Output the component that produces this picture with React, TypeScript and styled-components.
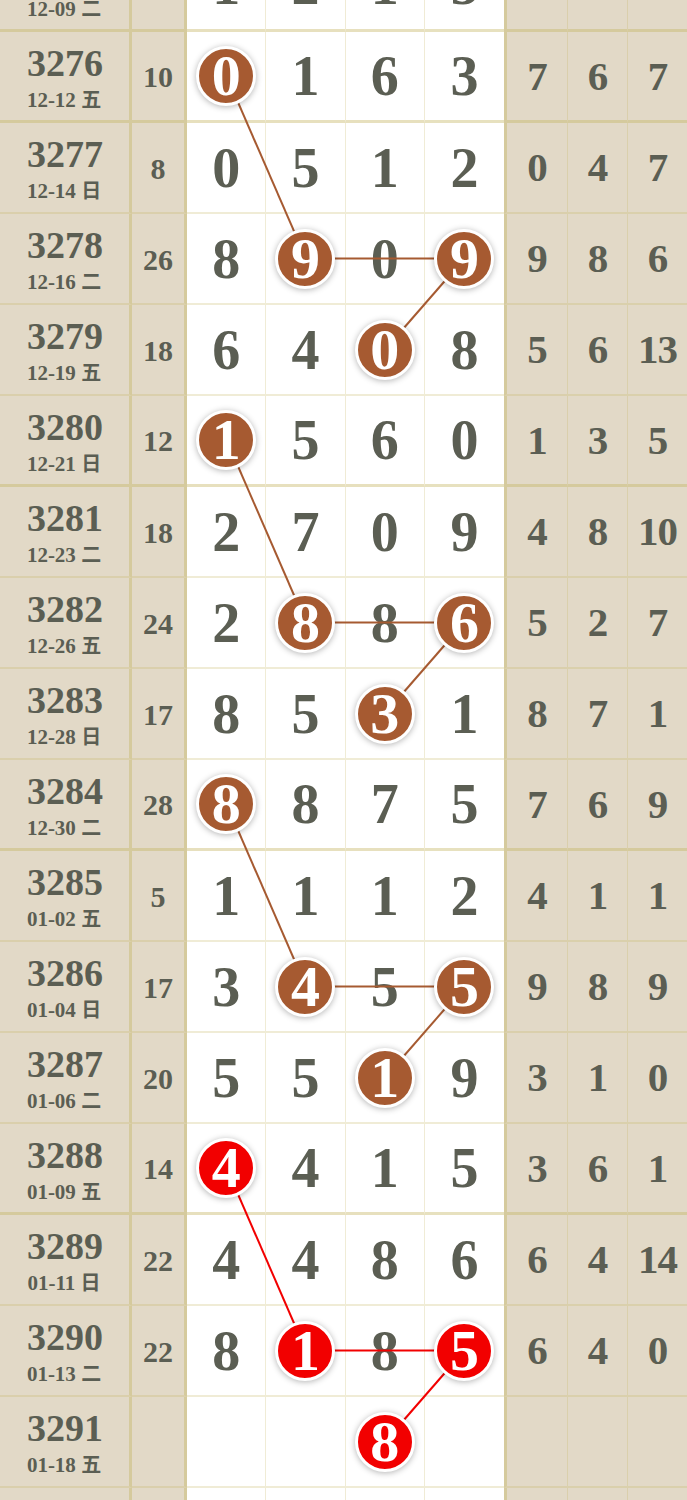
import React from "react";
import styled, { createGlobalStyle } from "styled-components";

const GlobalStyle = createGlobalStyle`
  html, body {
    margin: 0;
    padding: 0;
    background: #ffffff;
    overflow: hidden;
  }
  * { box-sizing: border-box; }
`;

const ROW_H = 91;
const LEFT_W = 132;
const SUM_W = 55;
const RIGHT_W = 183;
const PAGE_W = 687;
const DIGIT_W = (PAGE_W - LEFT_W - SUM_W - RIGHT_W) / 4;

const TEXT = "#5b5e53";
const BEIGE = "#e2d9c7";
const THIN = "rgba(196, 180, 95, 0.26)";
const THICK = "rgba(196, 180, 95, 0.4)";
const BROWN = "#a65a31";
const RED = "#f20000";

type Row = {
  p: string;
  d: string;
  w: string;
  sum: string;
  main: string[];
  right: string[];
};

const mk = (p: string, d: string, w: string, sum: string, main: string, right: string[]): Row => ({
  p,
  d,
  w,
  sum,
  main: main.split(""),
  right,
});

const rows: Row[] = [
  mk("3275", "12-09", "二", "9", "1215", ["5", "2", "7"]),
  mk("3276", "12-12", "五", "10", "0163", ["7", "6", "7"]),
  mk("3277", "12-14", "日", "8", "0512", ["0", "4", "7"]),
  mk("3278", "12-16", "二", "26", "8909", ["9", "8", "6"]),
  mk("3279", "12-19", "五", "18", "6408", ["5", "6", "13"]),
  mk("3280", "12-21", "日", "12", "1560", ["1", "3", "5"]),
  mk("3281", "12-23", "二", "18", "2709", ["4", "8", "10"]),
  mk("3282", "12-26", "五", "24", "2886", ["5", "2", "7"]),
  mk("3283", "12-28", "日", "17", "8531", ["8", "7", "1"]),
  mk("3284", "12-30", "二", "28", "8875", ["7", "6", "9"]),
  mk("3285", "01-02", "五", "5", "1112", ["4", "1", "1"]),
  mk("3286", "01-04", "日", "17", "3455", ["9", "8", "9"]),
  mk("3287", "01-06", "二", "20", "5519", ["3", "1", "0"]),
  mk("3288", "01-09", "五", "14", "4415", ["3", "6", "1"]),
  mk("3289", "01-11", "日", "22", "4486", ["6", "4", "14"]),
  mk("3290", "01-13", "二", "22", "8185", ["6", "4", "0"]),
  { p: "3291", d: "01-18", w: "五", sum: "", main: ["", "", "8", ""], right: ["", "", ""] },
  { p: "", d: "", w: "", sum: "", main: ["", "", "", ""], right: ["", "", ""] },
];

type BallMark = { row: number; col: number; red: boolean };

const balls: BallMark[] = [];
const links: { a: BallMark; b: BallMark }[] = [];
for (let g = 0; g < 4; g++) {
  const base = 1 + g * 4;
  const red = g === 3;
  const b0 = { row: base, col: 0, red };
  const b1 = { row: base + 2, col: 1, red };
  const b3 = { row: base + 2, col: 3, red };
  const b2 = { row: base + 3, col: 2, red };
  balls.push(b0, b1, b3, b2);
  links.push({ a: b0, b: b1 }, { a: b1, b: b3 }, { a: b3, b: b2 });
}

const ballAt = (row: number, col: number) => balls.find((b) => b.row === row && b.col === col);

const isThick = (i: number) => i % 4 === 1 || i === 0;
const borderOf = (i: number) => (isThick(i) ? 3 : 2);

const centerX = (col: number) => LEFT_W + SUM_W + DIGIT_W * (col + 0.5);
const centerY = (row: number) => ROW_H * row + (ROW_H - borderOf(row)) / 2;

const Page = styled.div`
  width: ${PAGE_W}px;
  height: 1500px;
  overflow: hidden;
  background: #ffffff;
`;

const Table = styled.div`
  position: relative;
  margin-top: -59px;
  width: ${PAGE_W}px;
  font-family: "Liberation Serif", "Noto Sans CJK SC", serif;
  font-weight: 700;
  color: ${TEXT};
`;

const RowBox = styled.div`
  display: grid;
  grid-template-columns: ${LEFT_W}px ${SUM_W}px repeat(4, 1fr) 63px 60px 60px;
  height: ${ROW_H}px;
`;

const Cell = styled.div<{ $thick: boolean }>`
  display: flex;
  align-items: center;
  justify-content: center;
  border-bottom: ${(p) => (p.$thick ? 3 : 2)}px solid ${(p) => (p.$thick ? THICK : THIN)};
  overflow: visible;
`;

const PeriodCell = styled(Cell)`
  flex-direction: column;
  gap: 6px;
  background: ${BEIGE};
  border-right: 3px solid ${THICK};
  padding-left: 1px;
`;

const PeriodNo = styled.div`
  font-size: 38px;
  line-height: 38px;
  height: 38px;
`;

const PeriodDate = styled.div`
  font-size: 21px;
  line-height: 21px;
  height: 21px;
  white-space: nowrap;
  margin-left: -2px;
`;

const Week = styled.span`
  font-family: "Noto Sans CJK SC", sans-serif;
  font-size: 20px;
  font-weight: 700;
`;

const SumCell = styled(Cell)`
  background: ${BEIGE};
  border-right: 3px solid ${THICK};
  font-size: 30px;
  line-height: 30px;
  padding-top: 2px;
`;

const DigitCell = styled(Cell)<{ $last: boolean }>`
  background: #ffffff;
  border-right: ${(p) => (p.$last ? "none" : `1px solid ${THIN}`)};
  font-size: 56px;
  line-height: 56px;
`;

const RightCell = styled(Cell)<{ $first: boolean }>`
  background: ${BEIGE};
  border-left: ${(p) => (p.$first ? `3px solid ${THICK}` : `1px solid ${THIN}`)};
  font-size: 41px;
  line-height: 41px;
  letter-spacing: -1px;
`;

const Ball = styled.div<{ $red: boolean }>`
  position: relative;
  z-index: 2;
  width: 60px;
  height: 60px;
  flex: none;
  border-radius: 50%;
  border: 3px solid #ffffff;
  background: ${(p) => (p.$red ? RED : BROWN)};
  box-shadow: 0 1px 6px rgba(0, 0, 0, 0.3);
  color: #ffffff;
  display: flex;
  align-items: center;
  justify-content: center;
  font-size: 58px;
  line-height: 58px;
`;

const Links = styled.svg`
  position: absolute;
  left: 0;
  top: 0;
  z-index: 1;
  pointer-events: none;
`;

export default function App() {
  return (
    <Page>
      <GlobalStyle />
      <Table>
        {rows.map((r, i) => {
          const thick = isThick(i);
          return (
            <RowBox key={i}>
              <PeriodCell $thick={thick}>
                {r.p && <PeriodNo>{r.p}</PeriodNo>}
                {r.d && (
                  <PeriodDate>
                    {r.d} <Week>{r.w}</Week>
                  </PeriodDate>
                )}
              </PeriodCell>
              <SumCell $thick={thick}>{r.sum}</SumCell>
              {r.main.map((m, c) => {
                const b = ballAt(i, c);
                return (
                  <DigitCell key={c} $thick={thick} $last={c === 3}>
                    {b ? <Ball $red={b.red}>{m}</Ball> : m}
                  </DigitCell>
                );
              })}
              {r.right.map((v, c) => (
                <RightCell key={c} $thick={thick} $first={c === 0}>
                  {v}
                </RightCell>
              ))}
            </RowBox>
          );
        })}
        <Links width={PAGE_W} height={ROW_H * rows.length}>
          {links.map((l, k) => (
            <line
              key={k}
              x1={centerX(l.a.col)}
              y1={centerY(l.a.row)}
              x2={centerX(l.b.col)}
              y2={centerY(l.b.row)}
              stroke={l.a.red ? RED : BROWN}
              strokeWidth={2}
            />
          ))}
        </Links>
      </Table>
    </Page>
  );
}
